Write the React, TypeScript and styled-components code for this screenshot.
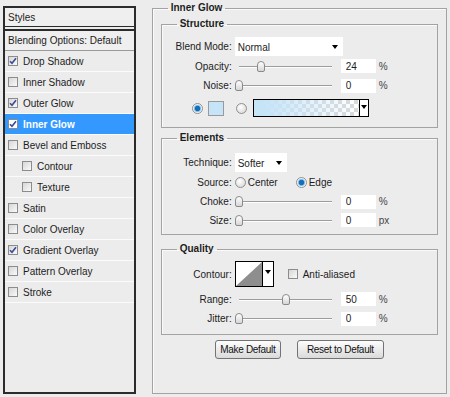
import { createGlobalStyle, styled } from 'styled-components';

const GlobalStyle = createGlobalStyle`
  html, body {
    margin: 0;
    padding: 0;
    background: #ececec;
  }
  body {
    font-family: "Liberation Sans", Arial, sans-serif;
    font-size: 10px;
    color: #1c1c1c;
  }
  * {
    box-sizing: border-box;
  }
`;

const Page = styled.div`
  display: flex;
  align-items: flex-start;
  gap: 16px;
  width: 450px;
  height: 397px;
  padding: 2px 3px 0 3px;
`;

/* ---------- left styles list ---------- */

const StylesPanel = styled.div`
  width: 133px;
  height: 388px;
  margin-top: 4px;
  border: 2px solid #2b2b2b;
  display: flex;
  flex-direction: column;
  background: #ececec;
`;

const PanelHeader = styled.div`
  height: 19px;
  border-bottom: 1px solid #2b2b2b;
  margin-bottom: 2px;
  padding-left: 3px;
  display: flex;
  align-items: center;
  background: #efefef;
`;

const BlendingRow = styled.div`
  height: 22px;
  border-top: 2px solid #2b2b2b;
  border-bottom: 1px solid #9a9a9a;
  padding-left: 3px;
  display: flex;
  align-items: center;
  background: #efefef;
`;

const StyleRow = styled.div<{ $active?: boolean; $nested?: boolean }>`
  height: 21px;
  border-bottom: 1px solid #fbfbfb;
  display: flex;
  align-items: center;
  gap: 5px;
  padding-left: ${(p) => (p.$nested ? 17 : 3)}px;
  background: ${(p) => (p.$active ? '#3399ff' : 'transparent')};
  color: ${(p) => (p.$active ? '#fff' : '#1c1c1c')};
  font-weight: ${(p) => (p.$active ? 700 : 400)};
`;

const Box = styled.span<{ $white?: boolean }>`
  width: 10px;
  height: 10px;
  flex: none;
  border: 1px solid #8c8c8c;
  background: ${(p) =>
    p.$white ? '#fff' : 'linear-gradient(135deg, #d6d6d6, #fafafa)'};
  display: inline-flex;
  align-items: center;
  justify-content: center;
`;

const CheckBox = ({ on, white }: { on?: boolean; white?: boolean }) => (
  <Box $white={white}>
    {on && (
      <svg width="8" height="8" viewBox="0 0 8 8">
        <path d="M1 4.2 L3 6.3 L7 1.2" fill="none" stroke="#3a4c96" strokeWidth="1.6" />
      </svg>
    )}
  </Box>
);

/* ---------- right options ---------- */

const Group = styled.fieldset<{ $outer?: boolean }>`
  margin: 0;
  min-width: 0;
  border: 1px solid #a3a3a3;
  box-shadow: inset 1px 1px 0 #fafafa;
  padding: ${(p) => (p.$outer ? '4px 8px 34px 8px' : '0')};
  width: ${(p) => (p.$outer ? '296px' : 'auto')};
  display: flex;
  flex-direction: column;
`;

const Legend = styled.legend<{ $indent: number }>`
  margin-left: ${(p) => p.$indent}px;
  padding: 0 3px;
  line-height: 12px;
  font-weight: 700;
  color: #1c1c1c;
`;

const Section = styled(Group)<{ $pt: number; $pb: number; $mb: number }>`
  padding: ${(p) => p.$pt}px 0 ${(p) => p.$pb}px 0;
  margin-bottom: ${(p) => p.$mb}px;
`;

const Row = styled.div<{ $h: number }>`
  display: grid;
  grid-template-columns: 70px auto;
  column-gap: 3px;
  align-items: center;
  height: ${(p) => p.$h}px;
`;

const Label = styled.span`
  text-align: right;
  white-space: nowrap;
`;

const Controls = styled.div`
  display: flex;
  align-items: center;
`;

const Select = styled.div<{ $w: number }>`
  width: ${(p) => p.$w}px;
  height: 19px;
  background: #fff;
  display: flex;
  align-items: center;
  justify-content: space-between;
  padding: 2px 5px 0 3px;
`;

const Arrow = styled.span`
  width: 0;
  height: 0;
  border-left: 3.5px solid transparent;
  border-right: 3.5px solid transparent;
  border-top: 4px solid #000;
`;

const Track = styled.div`
  position: relative;
  width: 101px;
  height: 13px;
  margin-right: 5px;
  &::before {
    content: '';
    position: absolute;
    left: 4px;
    right: 4px;
    top: 6px;
    height: 1px;
    background: #9c9c9c;
    box-shadow: 0 1px 0 #fdfdfd;
  }
`;

const Thumb = styled.span`
  position: absolute;
  top: 1px;
  width: 8px;
  height: 11px;
  border: 1px solid #8a8a8a;
  border-radius: 4px 4px 2px 2px;
  background: linear-gradient(#ffffff, #d6d6d6);
`;

const NumInput = styled.input`
  width: 35px;
  height: 14px;
  border: none;
  outline: none;
  padding: 0 0 0 5px;
  background: #fff;
  font: inherit;
  color: #1c1c1c;
`;

const Unit = styled.span`
  margin-left: 3px;
  color: #444;
`;

const Slider = ({ value, unit }: { value: number; unit: string }) => (
  <Controls>
    <Track>
      <Thumb style={{ left: Math.round((value / 100) * 93) }} />
    </Track>
    <NumInput readOnly value={String(value)} />
    <Unit>{unit}</Unit>
  </Controls>
);

const RadioDot = styled.span<{ $on?: boolean }>`
  width: 11px;
  height: 11px;
  flex: none;
  border-radius: 50%;
  border: 1px solid #8f8f8f;
  background: ${(p) =>
    p.$on
      ? 'radial-gradient(circle, #156fb8 0 2.3px, #78b9e6 3px, #f4f9fd 4.2px)'
      : 'radial-gradient(circle at 40% 35%, #ffffff, #d2d2d2)'};
`;

const ColorRow = styled.div`
  display: flex;
  align-items: center;
  height: 26px;
  padding-left: 30px;
`;

const Swatch = styled.span`
  width: 16px;
  height: 15px;
  margin: 0 12px 0 5px;
  border: 1px solid #9a9a9a;
  background: #c6e4f8;
`;

const GradientBox = styled.div`
  width: 116px;
  height: 18px;
  margin-left: 6px;
  border: 1px solid #000;
  display: flex;
`;

const GradientFill = styled.div`
  flex: 1;
  background: linear-gradient(to right, #c6e4f8 10%, rgba(198, 228, 248, 0)),
    repeating-conic-gradient(#d9d9d9 0 25%, #ffffff 0 50%) 0 0 / 8px 8px;
`;

const ArrowCell = styled.div`
  width: 9px;
  border-left: 1px solid #000;
  background: #fff;
  display: flex;
  justify-content: center;
  padding-top: 5px;
`;

const Option = styled.span<{ $gap: number }>`
  margin: 0 ${(p) => p.$gap}px 0 2px;
`;

const ContourBox = styled.div`
  width: 39px;
  height: 26px;
  border: 1px solid #000;
  background: #fff;
  display: flex;
`;

const ContourArrow = styled(ArrowCell)`
  width: 11px;
  padding-top: 8px;
`;

const Spacer = styled.span<{ $w: number }>`
  width: ${(p) => p.$w}px;
`;

const AntiAlias = styled.span`
  margin-left: 5px;
`;

const ButtonBar = styled.div`
  display: flex;
  justify-content: center;
  gap: 16px;
  margin-top: 5px;
`;

const Button = styled.button<{ $w: number }>`
  width: ${(p) => p.$w}px;
  height: 19px;
  padding: 0;
  border: 1px solid #737373;
  border-radius: 3px;
  background: linear-gradient(#fdfdfd, #dadada);
  font: 10px "Liberation Sans", Arial, sans-serif;
  letter-spacing: -0.3px;
  color: #111;
`;

const STYLE_ITEMS = [
  { name: 'Drop Shadow', on: true },
  { name: 'Inner Shadow' },
  { name: 'Outer Glow', on: true },
  { name: 'Inner Glow', on: true, active: true },
  { name: 'Bevel and Emboss' },
  { name: 'Contour', nested: true },
  { name: 'Texture', nested: true },
  { name: 'Satin' },
  { name: 'Color Overlay' },
  { name: 'Gradient Overlay', on: true },
  { name: 'Pattern Overlay' },
  { name: 'Stroke' },
];

const App = () => {
  return (
    <>
      <GlobalStyle />
      <Page>
        <StylesPanel>
          <PanelHeader>Styles</PanelHeader>
          <BlendingRow>Blending Options: Default</BlendingRow>
          {STYLE_ITEMS.map((item) => (
            <StyleRow key={item.name} $active={item.active} $nested={item.nested}>
              <CheckBox on={item.on} white={item.active} />
              {item.name}
            </StyleRow>
          ))}
        </StylesPanel>

        <Group $outer>
          <Legend $indent={7}>Inner Glow</Legend>

          <Section $pt={6} $pb={6} $mb={4}>
            <Legend $indent={15}>Structure</Legend>
            <Row $h={20}>
              <Label>Blend Mode:</Label>
              <Select $w={108}>
                Normal
                <Arrow />
              </Select>
            </Row>
            <Row $h={20}>
              <Label>Opacity:</Label>
              <Slider value={24} unit="%" />
            </Row>
            <Row $h={19}>
              <Label>Noise:</Label>
              <Slider value={0} unit="%" />
            </Row>
            <ColorRow>
              <RadioDot $on />
              <Swatch />
              <RadioDot />
              <GradientBox>
                <GradientFill />
                <ArrowCell>
                  <Arrow />
                </ArrowCell>
              </GradientBox>
            </ColorRow>
          </Section>

          <Section $pt={8} $pb={5} $mb={8}>
            <Legend $indent={15}>Elements</Legend>
            <Row $h={20}>
              <Label>Technique:</Label>
              <Select $w={52}>
                Softer
                <Arrow />
              </Select>
            </Row>
            <Row $h={20}>
              <Label>Source:</Label>
              <Controls>
                <RadioDot />
                <Option $gap={18}>Center</Option>
                <RadioDot $on />
                <Option $gap={0}>Edge</Option>
              </Controls>
            </Row>
            <Row $h={19}>
              <Label>Choke:</Label>
              <Slider value={0} unit="%" />
            </Row>
            <Row $h={18}>
              <Label>Size:</Label>
              <Slider value={0} unit="px" />
            </Row>
          </Section>

          <Section $pt={4} $pb={6} $mb={0}>
            <Legend $indent={15}>Quality</Legend>
            <Row $h={30}>
              <Label>Contour:</Label>
              <Controls>
                <ContourBox>
                  <svg width="26" height="24" viewBox="0 0 26 24">
                    <polygon points="0,24 26,0 26,24" fill="#8e8e8e" />
                  </svg>
                  <ContourArrow>
                    <Arrow />
                  </ContourArrow>
                </ContourBox>
                <Spacer $w={14} />
                <CheckBox />
                <AntiAlias>Anti-aliased</AntiAlias>
              </Controls>
            </Row>
            <Row $h={20}>
              <Label>Range:</Label>
              <Slider value={50} unit="%" />
            </Row>
            <Row $h={19}>
              <Label>Jitter:</Label>
              <Slider value={0} unit="%" />
            </Row>
          </Section>

          <ButtonBar>
            <Button $w={66}>Make Default</Button>
            <Button $w={87}>Reset to Default</Button>
          </ButtonBar>
        </Group>
      </Page>
    </>
  );
};

export default App;
